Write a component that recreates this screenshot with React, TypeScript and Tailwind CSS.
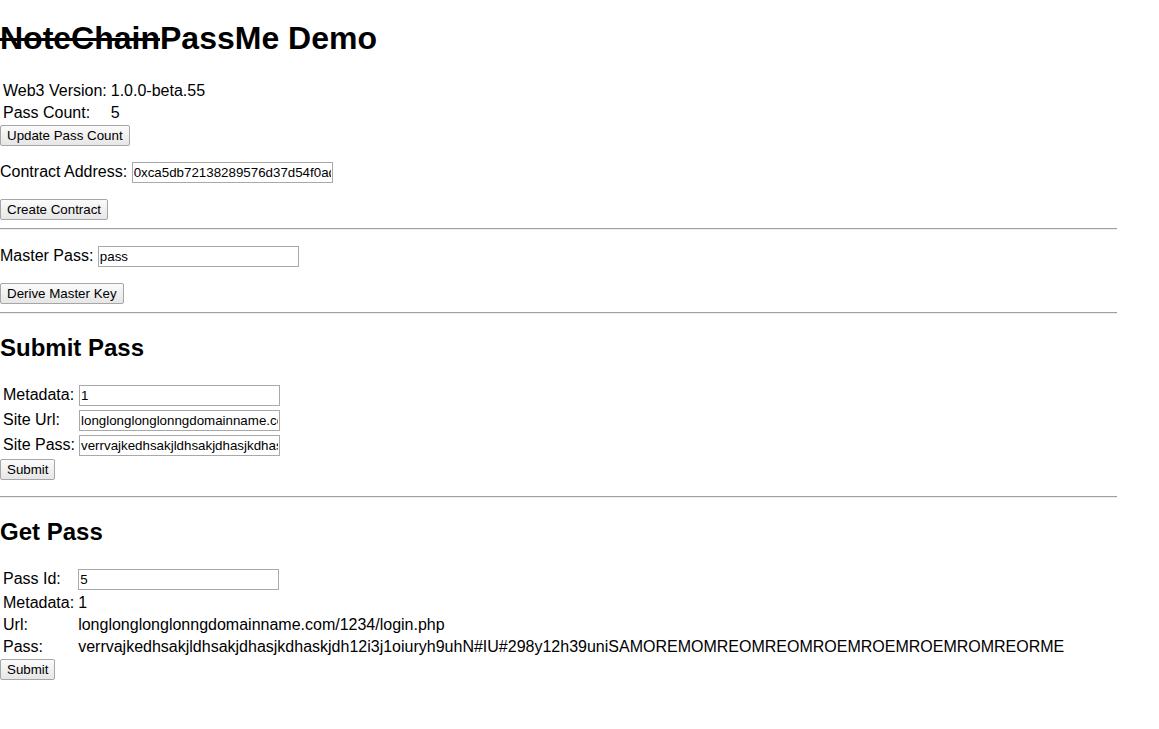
import { useState } from "react";

const btn =
  "block h-[21px] px-[6px] text-[13.33px] leading-[normal] text-black bg-gradient-to-b from-[#fbfbfb] to-[#e6e6e6] border border-[#a6a6a6] rounded-[2px]";
const input =
  "w-[201px] h-[21px] px-[1px] py-[1px] text-[13.33px] leading-[normal] text-black bg-white border border-[#a9a9a9] align-baseline";
const hr = "my-2 h-0 border-0 border-t border-t-[#a0a0a0] border-b border-b-[#eeeeee]";
const td = "p-[1px] align-middle text-left";

const App = () => {
  const [passCount] = useState(5);

  return (
    <div className="w-[1117px] bg-white text-black text-[16px] leading-[normal] font-['Liberation_Sans',Arial,sans-serif]">
      <h1 className="mt-[20.44px] mb-[21.44px] text-[32px] font-bold leading-[normal]">
        <s>NoteChain</s>PassMe Demo
      </h1>

      <table className="border-separate border-spacing-[2px]">
        <tbody>
          <tr>
            <td className={td}>Web3 Version:</td>
            <td className={td}>1.0.0-beta.55</td>
          </tr>
          <tr>
            <td className={td}>Pass Count:</td>
            <td className={td}>{passCount}</td>
          </tr>
        </tbody>
      </table>
      <button className={btn}>Update Pass Count</button>

      <p className="my-4">
        Contract Address:{" "}
        <input
          className={input}
          defaultValue="0xca5db72138289576d37d54f0ad2e1b94c7f3a8e6"
        />
      </p>
      <button className={btn}>Create Contract</button>

      <hr className={hr} />

      <p className="my-4">
        Master Pass: <input className={input} defaultValue="pass" />
      </p>
      <button className={btn}>Derive Master Key</button>

      <hr className={hr} />

      <h2 className="my-[19.92px] text-[24px] font-bold leading-[normal]">Submit Pass</h2>
      <div className="mb-4">
        <table className="border-separate border-spacing-[2px]">
          <tbody>
            <tr>
              <td className={td}>Metadata:</td>
              <td className={td}>
                <input className={input} defaultValue="1" />
              </td>
            </tr>
            <tr>
              <td className={td}>Site Url:</td>
              <td className={td}>
                <input
                  className={input}
                  defaultValue="longlonglonglonngdomainname.com/1234/login.php"
                />
              </td>
            </tr>
            <tr>
              <td className={td}>Site Pass:</td>
              <td className={td}>
                <input
                  className={input}
                  defaultValue="verrvajkedhsakjldhsakjdhasjkdhaskjdh12i3j1oiuryh9uhN#IU#298y12h39uniSAMOREMOMREOMREOMROEMROEMROEMROMREORME"
                />
              </td>
            </tr>
          </tbody>
        </table>
        <button className={btn}>Submit</button>
      </div>

      <hr className={hr} />

      <h2 className="my-[19.92px] text-[24px] font-bold leading-[normal]">Get Pass</h2>
      <div>
        <table className="border-separate border-spacing-[2px]">
          <tbody>
            <tr>
              <td className={td}>Pass Id:</td>
              <td className={td}>
                <input className={input} defaultValue="5" />
              </td>
            </tr>
            <tr>
              <td className={td}>Metadata:</td>
              <td className={td}>1</td>
            </tr>
            <tr>
              <td className={td}>Url:</td>
              <td className={td}>longlonglonglonngdomainname.com/1234/login.php</td>
            </tr>
            <tr>
              <td className={td}>Pass:</td>
              <td className={td}>
                verrvajkedhsakjldhsakjdhasjkdhaskjdh12i3j1oiuryh9uhN#IU#298y12h39uniSAMOREMOMREOMREOMROEMROEMROEMROMREORME
              </td>
            </tr>
          </tbody>
        </table>
        <button className={btn}>Submit</button>
      </div>
    </div>
  );
};

export default App;
